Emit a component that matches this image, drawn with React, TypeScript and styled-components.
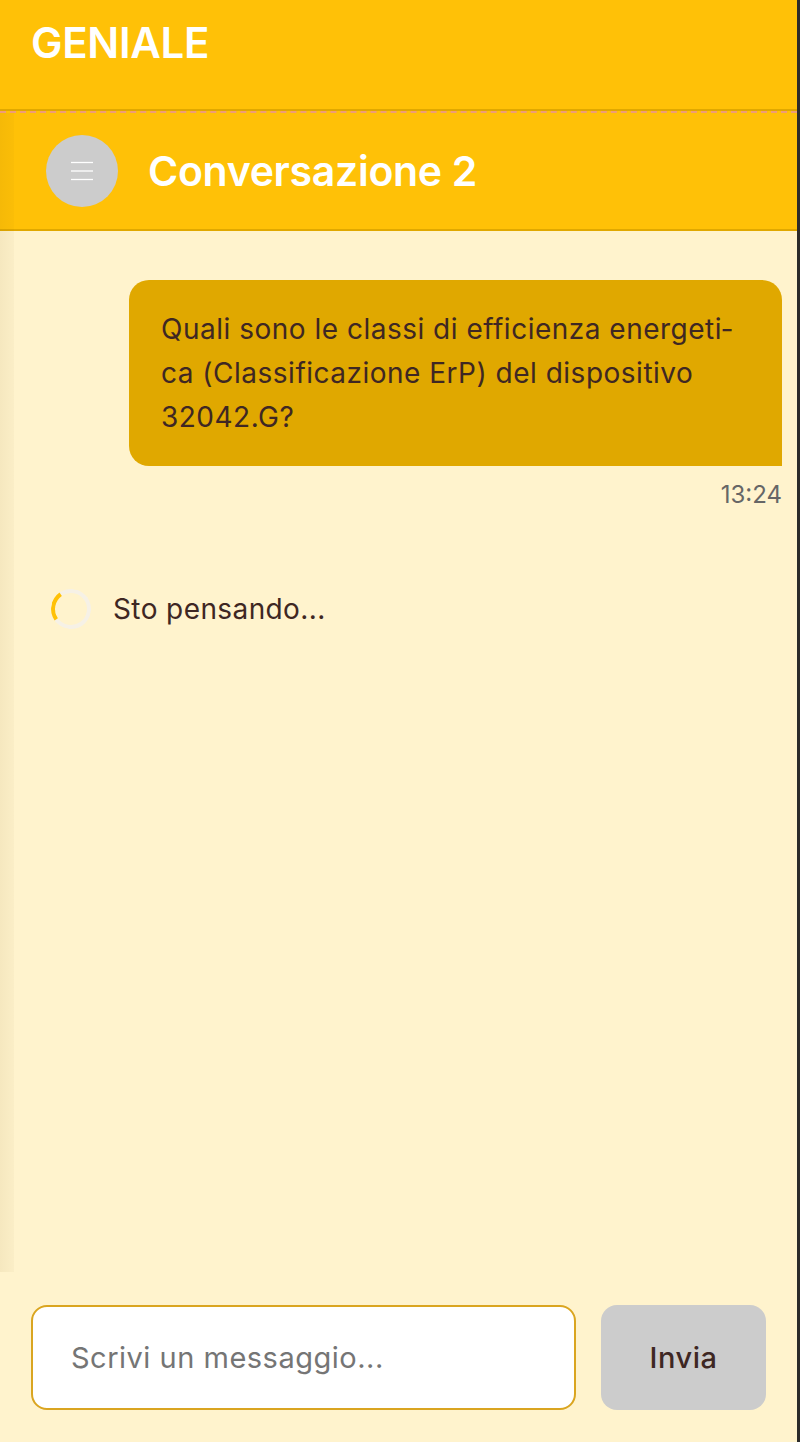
import React from 'react';
import styled, { createGlobalStyle } from 'styled-components';

const GlobalStyle = createGlobalStyle`
    html, body {
        margin: 0;
        padding: 0;
        background: #FFF3CD;
    }
    * {
        box-sizing: border-box;
    }
`;

const Page = styled.div`
    position: relative;
    display: flex;
    flex-direction: column;
    width: 800px;
    height: 1442px;
    border-right: 3px solid #2b2b2b;
    font-family: Inter, "Liberation Sans", sans-serif;
    color: #3E2723;
    background: #FFF3CD;
    overflow: hidden;
`;

const TopBar = styled.header`
    height: 111px;
    padding: 17px 31px 0;
    background: #FFC107;
    border-bottom: 2px solid #E0A800;
`;

const Brand = styled.h1`
    margin: 0;
    font-size: 42px;
    line-height: 52px;
    font-weight: 600;
    color: #fff;
    letter-spacing: -0.3px;
`;

const ChatHeader = styled.div`
    display: flex;
    align-items: center;
    gap: 30px;
    height: 120px;
    padding-left: 46px;
    background: #FFC107;
    border-top: 2px dashed rgba(232, 140, 170, 0.7);
    border-bottom: 2px solid #E0A800;
`;

const MenuButton = styled.button`
    display: flex;
    align-items: center;
    justify-content: center;
    width: 72px;
    height: 72px;
    padding: 0;
    border: none;
    border-radius: 50%;
    background: #CCCCCC;
    cursor: pointer;
`;

const ChatTitle = styled.h2`
    margin: 0;
    font-size: 41px;
    font-weight: 600;
    color: #fff;
    letter-spacing: -0.3px;
`;

const Messages = styled.main`
    flex: 1;
    display: flex;
    flex-direction: column;
    padding: 49px 15px 0 16px;
`;

const UserRow = styled.div`
    display: flex;
    flex-direction: column;
    align-items: flex-end;
`;

const Bubble = styled.div`
    width: 653px;
    padding: 27px 32px;
    background: #E0A800;
    border-radius: 20px 20px 0 20px;
    font-size: 28px;
    line-height: 44px;
    letter-spacing: 0.5px;
    color: #3E2723;
`;

const Time = styled.span`
    margin-top: 14px;
    font-size: 24px;
    line-height: 29px;
    color: #666;
`;

const Thinking = styled.div`
    display: flex;
    align-items: center;
    gap: 22px;
    margin: 80px 0 0 35px;
    font-size: 28px;
    letter-spacing: 0.4px;
    color: #3E2723;
`;

const Spinner = styled.div`
    flex-shrink: 0;
    width: 40px;
    height: 40px;
    border: 4px solid #f6f1e6;
    border-left-color: #FFC107;
    border-radius: 50%;
    transform: rotate(10deg);
`;

const Composer = styled.form`
    display: flex;
    align-items: center;
    gap: 25px;
    height: 170px;
    padding: 0 31px;
`;

const Input = styled.input`
    flex: 1;
    height: 105px;
    padding: 0 38px;
    border: 2px solid #DAA520;
    border-radius: 16px;
    background: #fff;
    font-family: Inter, "Liberation Sans", sans-serif;
    font-size: 29px;
    letter-spacing: 0.5px;
    color: #3E2723;
    outline: none;

    &::placeholder {
        color: #757575;
    }
`;

const SendButton = styled.button`
    width: 165px;
    height: 105px;
    border: none;
    border-radius: 16px;
    background: #CCCCCC;
    font-family: Inter, "Liberation Sans", sans-serif;
    font-size: 29px;
    font-weight: 500;
    letter-spacing: 0.5px;
    color: #3E2723;
    cursor: pointer;
`;

// edge of the hidden sidebar peeking in from the left
const SidebarEdge = styled.div`
    position: absolute;
    left: 0;
    top: 113px;
    bottom: 170px;
    width: 14px;
    background: linear-gradient(to right, rgba(120, 80, 0, 0.07), rgba(120, 80, 0, 0.03));
    pointer-events: none;
`;

const MenuIcon = () => (
    <svg width="22" height="20" viewBox="0 0 22 20">
        <g stroke="#fff" strokeWidth="1.3">
            <line x1="0" y1="1.5" x2="22" y2="1.5" />
            <line x1="0" y1="10" x2="22" y2="10" />
            <line x1="0" y1="18.5" x2="22" y2="18.5" />
        </g>
    </svg>
);

export default function App() {
    return (
        <>
            <GlobalStyle />
            <Page>
                <TopBar>
                    <Brand>GENIALE</Brand>
                </TopBar>
                <ChatHeader>
                    <MenuButton type="button" aria-label="menu">
                        <MenuIcon />
                    </MenuButton>
                    <ChatTitle>Conversazione 2</ChatTitle>
                </ChatHeader>
                <Messages>
                    <UserRow>
                        <Bubble lang="it">
                            Quali sono le classi di efficienza energeti{'\u00AD'}ca (Classificazione ErP) del dispositivo 32042.G?
                        </Bubble>
                        <Time>13:24</Time>
                    </UserRow>
                    <Thinking>
                        <Spinner />
                        <span>Sto pensando...</span>
                    </Thinking>
                </Messages>
                <Composer onSubmit={e => e.preventDefault()}>
                    <Input placeholder="Scrivi un messaggio..." />
                    <SendButton type="submit">Invia</SendButton>
                </Composer>
                <SidebarEdge />
            </Page>
        </>
    );
}
